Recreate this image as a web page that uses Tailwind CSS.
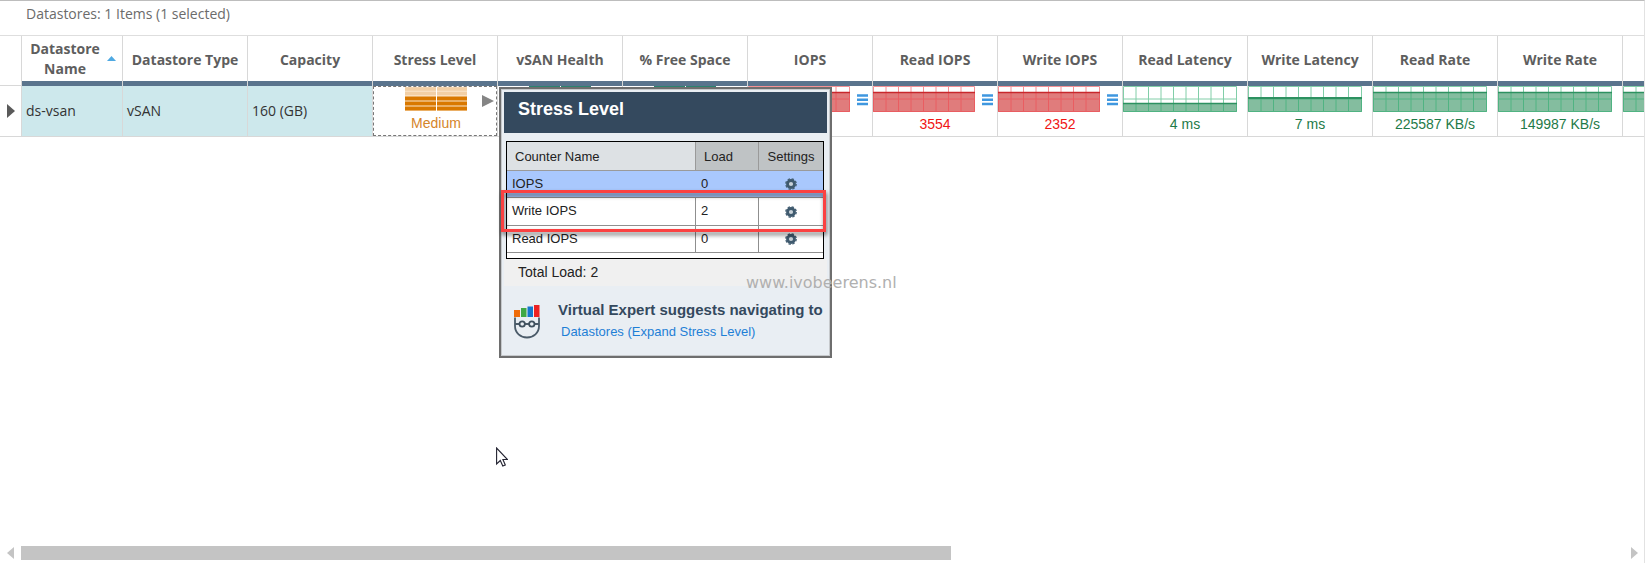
<!DOCTYPE html>
<html lang="en">
<head>
<meta charset="utf-8">
<title>Datastores</title>
<script src="https://cdn.jsdelivr.net/npm/@tailwindcss/browser@4"></script>
</head>
<body class="bg-white">
<svg class="hidden" aria-hidden="true">
  <symbol id="grid-narrow" viewBox="0 0 102 26">
    <path d="M13 0V26M25.500 0V26M38 0V26M50.500 0V26M63 0V26M75.500 0V26M88 0V26M0 13H102M0.500 0.500H101.500V25.500H0.500Z" fill="none" stroke="currentColor"/>
  </symbol>
  <symbol id="grid-wide" viewBox="0 0 114 26">
    <path d="M13 0V26M25.500 0V26M38 0V26M50.500 0V26M63 0V26M75.500 0V26M88 0V26M100.500 0V26M0 13H114M0.500 0.500H113.500V25.500H0.500Z" fill="none" stroke="currentColor"/>
  </symbol>
  <symbol id="chart-red" viewBox="0 0 102 26">
    <path d="M0 6H102V26H0Z" fill="#e07c7c"/>
    <use href="#grid-narrow" width="102" height="26" color="#f04a50" opacity=".6"/>
    <path d="M0 6.500H102" stroke="#c8282c" stroke-width="1.500"/>
  </symbol>
  <symbol id="chart-high" viewBox="0 0 114 26">
    <path d="M0 6H114V26H0Z" fill="#84bd9f"/>
    <use href="#grid-wide" width="114" height="26" color="#2fae70" opacity=".6"/>
    <path d="M0 6.500H114" stroke="#2d9160" stroke-width="1.500"/>
  </symbol>
  <symbol id="chart-mid" viewBox="0 0 114 26">
    <path d="M0 12H114V26H0Z" fill="#84bd9f"/>
    <use href="#grid-wide" width="114" height="26" color="#2fae70" opacity=".6"/>
    <path d="M0 12H114" stroke="#2d9160" stroke-width="2"/>
  </symbol>
  <symbol id="chart-low" viewBox="0 0 114 26">
    <path d="M0 17H114V26H0Z" fill="#84bd9f"/>
    <use href="#grid-wide" width="114" height="26" color="#2fae70" opacity=".6"/>
    <path d="M0 17.500H114" stroke="#2d9160" stroke-width="1.500"/>
  </symbol>
  <symbol id="menu" viewBox="0 0 11 12">
    <path d="M0 1.500H11M0 5.750H11M0 10H11" stroke="#3f97df" stroke-width="2.600"/>
  </symbol>
  <symbol id="gear" viewBox="0 0 12 12">
    <circle cx="6" cy="6" r="5.200" fill="none" stroke="#4a6478" stroke-width="1.400" stroke-dasharray="2.400 1.684"/>
    <circle cx="6" cy="6" r="3.500" fill="#c9d2d9" stroke="#3f5a6e" stroke-width="2.800"/>
  </symbol>
</svg>

<main class="relative flex min-h-screen flex-col overflow-hidden border-t border-r border-t-[#bdbdbd] border-r-[#e2e2e2] font-['Open_Sans','Noto_Sans',sans-serif] text-sm text-[#333]">
  <h1 class="h-[34px] pt-[3px] pl-[26px] text-sm leading-5 text-[#6b6b6b]">Datastores: 1 Items (1 selected)</h1>

  <section class="relative" aria-label="Datastore list">
    <div class="overflow-hidden">
      <table class="w-[1748px] table-fixed border-separate border-spacing-0 border-t border-[#dedede]">
        <colgroup>
          <col class="w-[22px]"><col class="w-[101px]"><col class="w-[125px]"><col class="w-[125px]"><col class="w-[125px]"><col class="w-[125px]"><col class="w-[125px]"><col class="w-[125px]"><col class="w-[125px]"><col class="w-[125px]"><col class="w-[125px]"><col class="w-[125px]"><col class="w-[125px]"><col class="w-[125px]"><col class="w-[125px]">
        </colgroup>
        <thead class="text-[#5e5e5e] [&_th]:h-[50px] [&_th]:border-r [&_th]:border-[#d8d8d8] [&_th]:p-0 [&_th]:font-bold">
          <tr>
            <th class="border-b" aria-label="Row"></th>
            <th aria-sort="ascending"><div class="flex h-[45px] items-center justify-between pr-[6px] pl-[7px]"><span class="w-[72px] leading-5">Datastore Name</span><svg class="h-[5px] w-[9px]" viewBox="0 0 9 5"><path d="M0 5L4.500 0L9 5Z" fill="#4fa9e2"/></svg></div><div class="h-[5px] bg-[#5a748d]"></div></th>
            <th><div class="h-[45px] leading-[47px]">Datastore Type</div><div class="h-[5px] bg-[#5a748d]"></div></th>
            <th><div class="h-[45px] leading-[47px]">Capacity</div><div class="h-[5px] bg-[#5a748d]"></div></th>
            <th><div class="h-[45px] leading-[47px]">Stress Level</div><div class="h-[5px] bg-[#5a748d]"></div></th>
            <th><div class="h-[45px] leading-[47px]">vSAN Health</div><div class="h-[5px] bg-[#5a748d]"></div></th>
            <th><div class="h-[45px] leading-[47px]">% Free Space</div><div class="h-[5px] bg-[#5a748d]"></div></th>
            <th><div class="h-[45px] leading-[47px]">IOPS</div><div class="h-[5px] bg-[#5a748d]"></div></th>
            <th><div class="h-[45px] leading-[47px]">Read IOPS</div><div class="h-[5px] bg-[#5a748d]"></div></th>
            <th><div class="h-[45px] leading-[47px]">Write IOPS</div><div class="h-[5px] bg-[#5a748d]"></div></th>
            <th><div class="h-[45px] leading-[47px]">Read Latency</div><div class="h-[5px] bg-[#5a748d]"></div></th>
            <th><div class="h-[45px] leading-[47px]">Write Latency</div><div class="h-[5px] bg-[#5a748d]"></div></th>
            <th><div class="h-[45px] leading-[47px]">Read Rate</div><div class="h-[5px] bg-[#5a748d]"></div></th>
            <th><div class="h-[45px] leading-[47px]">Write Rate</div><div class="h-[5px] bg-[#5a748d]"></div></th>
            <th><div class="h-[45px]"></div><div class="h-[5px] bg-[#5a748d]"></div></th>
          </tr>
        </thead>
        <tbody>
          <tr class="[&>td]:h-[50px] [&>td]:border-r [&>td]:border-b [&>td]:border-[#d8d8d8] [&>td]:p-0">
            <td><svg class="ml-[7px] h-[14px] w-2" viewBox="0 0 8 14"><path d="M0 0L8 7L0 14Z" fill="#5a5a5a"/></svg></td>
            <td class="bg-[#cde8ec]"><span class="pl-1">ds-vsan</span></td>
            <td class="bg-[#cde8ec]"><span class="pl-1">vSAN</span></td>
            <td class="bg-[#cde8ec]"><span class="pl-1">160 (GB)</span></td>
            <td class="align-top">
              <div class="flex h-[50px] items-start border border-dashed border-[#777] text-center">
                <div class="ml-[31px] w-[62px]">
                  <svg class="h-6 w-[62px]" viewBox="0 0 62 24"><path d="M0 0H62V24H0Z" fill="#fbe6cd"/><path d="M0 2H62M0 6.500H62" stroke="#f2cfa5" stroke-width="3.500"/><path d="M0 11.500H62M0 16.500H62M0 21.500H62" stroke="#d97800" stroke-width="4"/><path d="M31.500 0V24" stroke="#fff"/></svg>
                  <div class="leading-6 text-[#d5852a] font-['Liberation_Sans',sans-serif]">Medium</div>
                </div>
                <button type="button" class="mt-2 ml-[15px]" aria-label="Expand stress level"><svg class="h-3 w-3" viewBox="0 0 12 12"><path d="M0 0L12 6L0 12Z" fill="#858585"/></svg></button>
              </div>
            </td>
            <td class="align-top"><svg class="mx-auto h-6 w-[62px]" viewBox="0 0 62 24"><path d="M0 2H62M0 7H62M0 12H62M0 17H62M0 22H62" stroke="#2c8270" stroke-width="4"/><path d="M31.500 0V24" stroke="#fff"/></svg></td>
            <td class="align-top"><svg class="mx-auto h-6 w-[62px]" viewBox="0 0 62 24"><path d="M0 2H62M0 7H62M0 12H62M0 17H62M0 22H62" stroke="#2c8270" stroke-width="4"/><path d="M31.500 0V24" stroke="#fff"/></svg></td>
            <td class="align-top"><div class="flex items-start gap-[7px]"><svg class="h-[26px] w-[102px]"><use href="#chart-red"/></svg><button type="button" class="mt-2" aria-label="IOPS menu"><svg class="h-3 w-[11px]"><use href="#menu"/></svg></button></div></td>
            <td class="align-top"><div class="flex items-start gap-[7px]"><svg class="h-[26px] w-[102px]"><use href="#chart-red"/></svg><button type="button" class="mt-2" aria-label="Read IOPS menu"><svg class="h-3 w-[11px]"><use href="#menu"/></svg></button></div><div class="text-center leading-6 text-[#f01414] font-['Liberation_Sans',sans-serif]">3554</div></td>
            <td class="align-top"><div class="flex items-start gap-[7px]"><svg class="h-[26px] w-[102px]"><use href="#chart-red"/></svg><button type="button" class="mt-2" aria-label="Write IOPS menu"><svg class="h-3 w-[11px]"><use href="#menu"/></svg></button></div><div class="text-center leading-6 text-[#f01414] font-['Liberation_Sans',sans-serif]">2352</div></td>
            <td class="align-top"><svg class="h-[26px] w-[114px]"><use href="#chart-low"/></svg><div class="text-center leading-6 text-[#1e7a48] font-['Liberation_Sans',sans-serif]">4 ms</div></td>
            <td class="align-top"><svg class="h-[26px] w-[114px]"><use href="#chart-mid"/></svg><div class="text-center leading-6 text-[#1e7a48] font-['Liberation_Sans',sans-serif]">7 ms</div></td>
            <td class="align-top"><svg class="h-[26px] w-[114px]"><use href="#chart-high"/></svg><div class="text-center leading-6 text-[#1e7a48] font-['Liberation_Sans',sans-serif]">225587 KB/s</div></td>
            <td class="align-top"><svg class="h-[26px] w-[114px]"><use href="#chart-high"/></svg><div class="text-center leading-6 text-[#1e7a48] font-['Liberation_Sans',sans-serif]">149987 KB/s</div></td>
            <td class="align-top"><svg class="h-[26px] w-[114px]"><use href="#chart-high"/></svg></td>
          </tr>
        </tbody>
      </table>
    </div>

    <aside class="absolute top-[52px] left-[499px] w-[333px] border-2 border-[#6e6e6e] bg-[#e9eef3] p-[3px] pb-[13px] font-['Liberation_Sans',sans-serif] text-[#222] shadow-[inset_0_0_0_1px_#c6c9cc]">
      <h2 class="h-[41px] bg-[#34495e] pl-[14px] text-lg leading-[34px] font-bold text-white">Stress Level</h2>
      <div class="relative mt-2 ml-[2px] w-[318px] border border-black bg-white pb-[5px]">
        <table class="w-full table-fixed border-separate border-spacing-0 text-[13px] [&_td]:border-b [&_td]:border-[#8f8f8f] [&_td]:p-0 [&_td:not(:last-child)]:border-r [&_th]:border-b [&_th]:border-[#9a9a9a] [&_th:not(:last-child)]:border-r">
          <colgroup><col><col class="w-[63px]"><col class="w-[64px]"></colgroup>
          <thead class="bg-[#bfc3c5]">
            <tr class="h-[29px] [&>th]:p-0 [&>th]:pt-[3px] [&>th]:font-normal"><th class="bg-[#dde1e4] text-left"><span class="pl-2">Counter Name</span></th><th class="text-left"><span class="pl-2">Load</span></th><th class="text-center">Settings</th></tr>
          </thead>
          <tbody>
            <tr class="h-[27px] bg-[#a9c8fd] [&>td]:border-r-0!"><td><span class="pl-[5px]">IOPS</span></td><td><span class="pl-[5px]">0</span></td><td class="text-center"><button type="button" class="block mx-auto" aria-label="IOPS settings"><svg class="h-3 w-3"><use href="#gear"/></svg></button></td></tr>
            <tr class="h-[28px]"><td><span class="pl-[5px]">Write IOPS</span></td><td><span class="pl-[5px]">2</span></td><td class="text-center"><button type="button" class="block mx-auto" aria-label="Write IOPS settings"><svg class="h-3 w-3"><use href="#gear"/></svg></button></td></tr>
            <tr class="h-[27px]"><td><span class="pl-[5px]">Read IOPS</span></td><td><span class="pl-[5px]">0</span></td><td class="text-center"><button type="button" class="block mx-auto" aria-label="Read IOPS settings"><svg class="h-3 w-3"><use href="#gear"/></svg></button></td></tr>
          </tbody>
        </table>
        <div class="absolute top-[48px] -left-[6px] h-[42px] w-[325px] border-[3px] border-[#fb4141] drop-shadow-[1px_3px_2px_rgba(0,0,0,0.55)]"></div>
      </div>
      <p class="h-[27px] bg-[#f0f0f0] pl-[14px] leading-[27px]">Total Load: 2</p>
      <div class="flex pt-[13px] pl-[10px]">
        <svg class="mt-[6px] h-[34px] w-[26px]" viewBox="0 0 26 34"><path d="M0 5H6V12H0Z" fill="#ef6c0a"/><path d="M7 3H12.500V12H7Z" fill="#3fa845"/><path d="M13.500 1.500H19V12H13.500Z" fill="#1577cc"/><path d="M20 0H25.500V12H20Z" fill="#ec2224"/><path d="M1 12.500V21C1 28 6.500 32.500 13 32.500S25 28 25 21V12.500" fill="none" stroke="#4b5b69" stroke-width="1.800"/><path d="M1 19H5.500M11 19H15M20.500 19H25" stroke="#4b5b69" stroke-width="1.800"/><circle cx="8.200" cy="19" r="2.700" fill="none" stroke="#3f505e" stroke-width="1.800"/><circle cx="17.800" cy="19" r="2.700" fill="none" stroke="#3f505e" stroke-width="1.800"/></svg>
        <div class="ml-[18px] whitespace-nowrap">
          <p class="text-[15px] leading-[22px] font-bold text-[#34495e]">Virtual Expert suggests navigating to</p>
          <a href="#" class="block pl-[3px] text-[13px] leading-[22px] text-[#1e7fd6]">Datastores (Expand Stress Level)</a>
        </div>
      </div>
    </aside>
    <p class="absolute top-[236px] left-[746px] text-base leading-6 text-[#b0b0b0] font-['DejaVu_Sans',sans-serif]">www.ivobeerens.nl</p>
    <svg class="absolute top-[412px] left-[496px] h-5 w-3" viewBox="0 0 12 20"><path d="M0.600 1V17L4.300 13.500L6.800 19L9.300 18L6.900 12.500H11.500Z" fill="#fff" stroke="#222230" stroke-width="1.100"/></svg>
  </section>

  <div class="mt-auto mb-[3px] flex h-[14px] items-center pr-[6px] pl-[7px]" role="group" aria-label="Horizontal scroll">
    <button type="button" aria-label="Scroll left"><svg class="block h-3 w-[7px]" viewBox="0 0 7 12"><path d="M7 0L0 6L7 12Z" fill="#c4c4c4"/></svg></button>
    <div class="mx-[7px] flex-1"><div class="h-[14px] w-[58%] bg-[#c4c4c4]"></div></div>
    <button type="button" aria-label="Scroll right"><svg class="block h-3 w-[7px]" viewBox="0 0 7 12"><path d="M0 0L7 6L0 12Z" fill="#c4c4c4"/></svg></button>
  </div>
</main>
</body>
</html>
